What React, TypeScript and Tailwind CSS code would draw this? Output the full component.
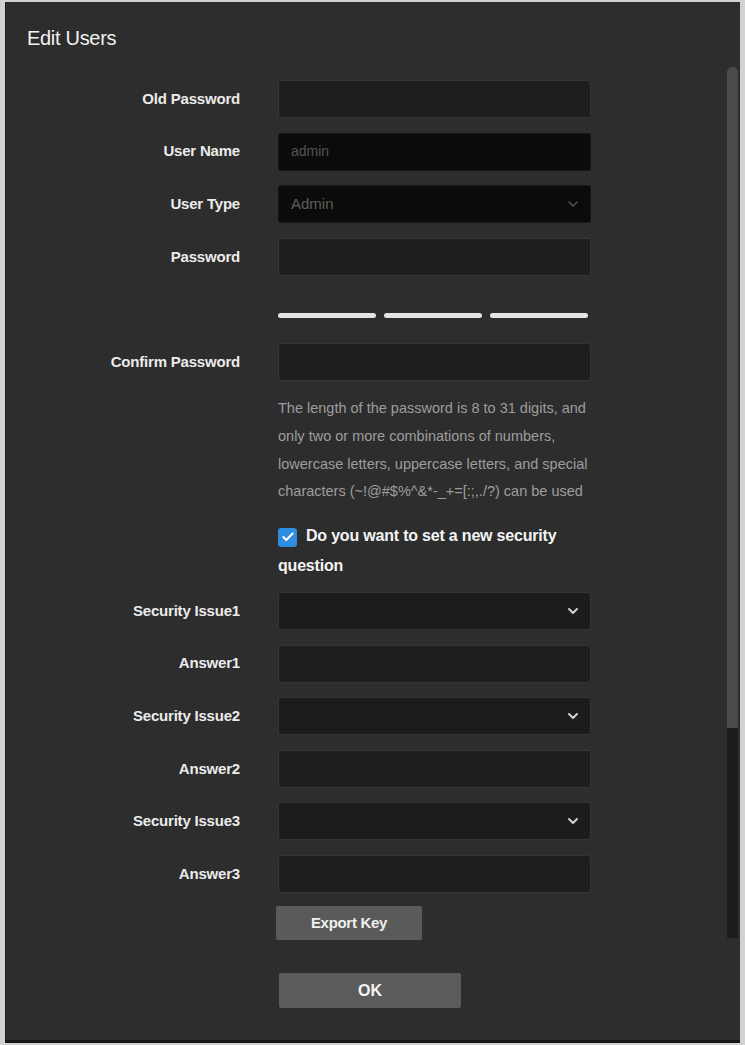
import React from 'react';
import { ChevronDown, Check } from 'lucide-react';

const font = { fontFamily: '"Liberation Sans", Arial, sans-serif' };

function Row({ label, first, children }: { label: string; first?: boolean; children: React.ReactNode }) {
  return (
    <div className={`flex items-center ${first ? '' : 'mt-[14.6px]'}`}>
      <div className="w-[234px] text-right text-[15px] font-bold tracking-[-0.2px] text-[#ebebeb]">{label}</div>
      <div className="ml-[38px] w-[313px]">{children}</div>
    </div>
  );
}

function TextBox({ value, disabled }: { value?: string; disabled?: boolean }) {
  return (
    <div
      className={`h-[38px] rounded-[3px] border flex items-center px-[12px] text-[14px] ${
        disabled ? 'bg-[#0b0b0b] border-[#161616] text-[#555555]' : 'bg-[#1e1e1e] border-[#363636]'
      }`}
    >
      {value}
    </div>
  );
}

function Select({ value, disabled }: { value?: string; disabled?: boolean }) {
  return (
    <div
      className={`h-[38px] rounded-[3px] border flex items-center justify-between pl-[12px] pr-[9px] text-[15px] ${
        disabled ? 'bg-[#0b0b0b] border-[#161616] text-[#5e5e5e]' : 'bg-[#1c1c1c] border-[#363636]'
      }`}
    >
      <span>{value}</span>
      <ChevronDown size={16} strokeWidth={disabled ? 2 : 3} className={disabled ? 'text-[#5a5a5a]' : 'text-[#cfcfcf]'} />
    </div>
  );
}

function Spacer({ className, children }: { className: string; children: React.ReactNode }) {
  return (
    <div className={`flex ${className}`}>
      <div className="w-[234px]" />
      <div className="ml-[38px] w-[313px]">{children}</div>
    </div>
  );
}

export default function App() {
  return (
    <div style={font} className="h-[1045px] bg-[#d2d2d2] pt-[2px] pl-[5px] pr-[5px]">
      <div className="h-[1041px] flex bg-[#2d2d2d] border-l border-[#1d1d1d] border-b-[3px] border-b-[#161616]">
        <div className="flex-1">
          <div className="pl-[21px] pt-[24px] text-[20px] leading-[24px] tracking-[-0.3px] text-[#f2f2f2]">Edit Users</div>

          <div className="mt-[30px]">
            <Row label="Old Password" first>
              <TextBox />
            </Row>
            <Row label="User Name">
              <TextBox value="admin" disabled />
            </Row>
            <Row label="User Type">
              <Select value="Admin" disabled />
            </Row>
            <Row label="Password">
              <TextBox />
            </Row>

            <Spacer className="mt-[37.5px]">
              <div className="flex gap-[8px] pr-[3px]">
                <div className="flex-1 h-[5px] rounded-full bg-[#e4e4e4]" />
                <div className="flex-1 h-[5px] rounded-full bg-[#e4e4e4]" />
                <div className="flex-1 h-[5px] rounded-full bg-[#e4e4e4]" />
              </div>
            </Spacer>

            <div className="mt-[25px]">
              <Row label="Confirm Password" first>
                <TextBox />
              </Row>
            </div>

            <Spacer className="mt-[14px]">
              <p className="text-[14.5px] leading-[27.7px] text-[#9d9d9d] whitespace-nowrap">
                The length of the password is 8 to 31 digits, and
                <br />
                only two or more combinations of numbers,
                <br />
                lowercase letters, uppercase letters, and special
                <br />
                characters (~!@#$%^&amp;*-_+=[:;,./?) can be used
              </p>
            </Spacer>

            <Spacer className="mt-[15px]">
              <p className="text-[16px] leading-[30px] font-bold tracking-[-0.2px] text-[#f4f4f4]">
                <span className="inline-flex align-[-3px] mr-[9px] w-[19px] h-[19px] rounded-[3px] bg-[#2e8ddf] items-center justify-center">
                  <Check size={14} strokeWidth={3.5} className="text-white" />
                </span>
                Do you want to set a new security question
              </p>
            </Spacer>

            <div className="mt-[11px]">
              <Row label="Security Issue1" first>
                <Select />
              </Row>
              <Row label="Answer1">
                <TextBox />
              </Row>
              <Row label="Security Issue2">
                <Select />
              </Row>
              <Row label="Answer2">
                <TextBox />
              </Row>
              <Row label="Security Issue3">
                <Select />
              </Row>
              <Row label="Answer3">
                <TextBox />
              </Row>
            </div>

            <div className="mt-[13px] pl-[270px]">
              <button className="w-[146px] h-[34px] rounded-[2px] bg-[#5a5a5a] text-[15px] font-bold tracking-[-0.3px] text-[#f0f0f0]">
                Export Key
              </button>
            </div>

            <div className="mt-[33px] pl-[273px]">
              <button className="w-[182px] h-[35px] rounded-[2px] bg-[#5b5b5b] text-[16px] font-bold text-[#f4f4f4]">OK</button>
            </div>
          </div>
        </div>

        <div className="w-[11px] mr-[2px] pt-[65px] flex flex-col">
          <div className="h-[661px] rounded-t-[5px] bg-[#4a4a4a]" />
          <div className="h-[210px] bg-[#1c1c1c]" />
        </div>
      </div>
    </div>
  );
}
